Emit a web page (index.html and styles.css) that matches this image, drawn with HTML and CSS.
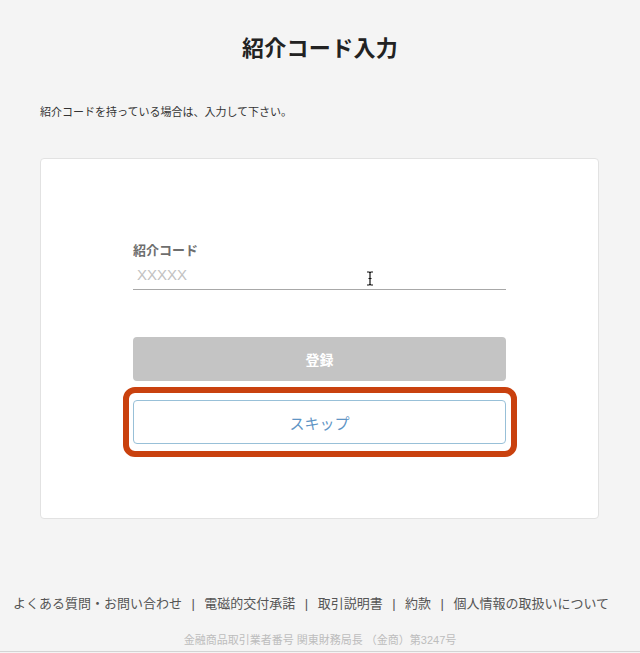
FILE: index.html
```html
<!DOCTYPE html>
<html lang="ja">
<head>
<meta charset="utf-8">
<title>紹介コード入力</title>
<link rel="stylesheet" href="styles.css">
</head>
<body>
<main class="page">
  <h1 class="title">紹介コード入力</h1>
  <p class="lead">紹介コードを持っている場合は、入力して下さい。</p>
  <section class="card">
    <form class="form">
      <label class="label" for="code">紹介コード</label>
      <div class="field">
        <input id="code" class="input" type="text" placeholder="XXXXX">
        <svg class="ibeam" width="8" height="15" viewBox="0 0 8 15" aria-hidden="true">
          <path d="M1 1h2.2L4 1.8 4.8 1H7M4 1.8v11.4M1 14h2.2l.8-.8.8.8H7M2.5 7.5h3" fill="none" stroke="#111" stroke-width="1.2"/>
        </svg>
      </div>
      <button type="button" class="btn btn-primary">登録</button>
      <div class="skip-wrap">
        <button type="button" class="btn btn-outline">スキップ</button>
        <span class="highlight" aria-hidden="true"></span>
      </div>
    </form>
  </section>
  <footer class="footer">
    <nav class="links">
      <a href="#">よくある質問・お問い合わせ</a><span class="sep">|</span><a href="#">電磁的交付承諾</a><span class="sep">|</span><a href="#">取引説明書</a><span class="sep">|</span><a href="#">約款</a><span class="sep">|</span><a href="#">個人情報の取扱いについて</a>
    </nav>
    <p class="reg">金融商品取引業者番号 関東財務局長 （金商）第3247号</p>
    <div class="bottom-rule"></div>
  </footer>
</main>
</body>
</html>
```
FILE: styles.css
```css
* { box-sizing: border-box; }
html, body {
  margin: 0;
  padding: 0;
  background: #f4f4f4;
  font-family: "Helvetica Neue", "Liberation Sans", "Noto Sans CJK JP", sans-serif;
  color: #333;
}
.page {
  width: 640px;
  height: 653px;
  padding-top: 34px;
  overflow: hidden;
}
.title {
  margin: 0;
  text-align: center;
  font-size: 22px;
  line-height: 30px;
  font-weight: 700;
  color: #222;
  letter-spacing: 0.3px;
}
.lead {
  margin: 40px 0 0 40px;
  font-size: 11px;
  line-height: 16px;
  color: #333;
}
.card {
  margin: 38px 0 0 40px;
  width: 559px;
  height: 361px;
  background: #fff;
  border: 1px solid #e2e2e2;
  border-radius: 4px;
  padding: 83px 92px 0 92px;
}
.form {
  display: flex;
  flex-direction: column;
}
.label {
  font-size: 13px;
  line-height: 18px;
  font-weight: 700;
  color: #6e6e6e;
}
.field {
  position: relative;
  margin-top: 2px;
}
.input {
  display: block;
  width: 100%;
  height: 28px;
  border: 0;
  border-bottom: 1px solid #a8a8a8;
  background: transparent;
  padding: 0 4px 2px;
  font-family: "Liberation Sans", sans-serif;
  font-size: 15px;
  color: #333;
  outline: none;
}
.input::placeholder { color: #c2c2c2; }
.ibeam {
  position: absolute;
  left: 233px;
  top: 9px;
}
.btn {
  display: block;
  width: 100%;
  height: 44px;
  border-radius: 4px;
  font-family: "Helvetica Neue", "Liberation Sans", "Noto Sans CJK JP", sans-serif;
  cursor: pointer;
}
.btn-primary {
  margin-top: 47px;
  background: #c4c4c4;
  border: 0;
  color: #fff;
  font-size: 14px;
  font-weight: 700;
}
.skip-wrap {
  position: relative;
  margin-top: 19px;
}
.btn-outline {
  background: #fff;
  border: 1px solid #98c0d8;
  color: #5f95c5;
  font-size: 15px;
}
.highlight {
  position: absolute;
  left: -10px;
  right: -11px;
  top: -13px;
  bottom: -13px;
  border: 6px solid #c9410e;
  border-radius: 12px;
  pointer-events: none;
}
.footer {
  margin-top: 75px;
  text-align: center;
}
.links {
  font-size: 13px;
  line-height: 20px;
  color: #555;
  white-space: nowrap;
  padding-right: 18px;
}
.links a {
  color: #555;
  text-decoration: none;
}
.sep {
  display: inline-block;
  margin: 0 9.5px;
  color: #555;
}
.reg {
  margin: 18px 0 0;
  font-size: 11px;
  line-height: 16px;
  color: #bdbdbd;
}
.bottom-rule {
  margin-top: 3px;
  border-top: 1px solid #d4d4d4;
}
```
